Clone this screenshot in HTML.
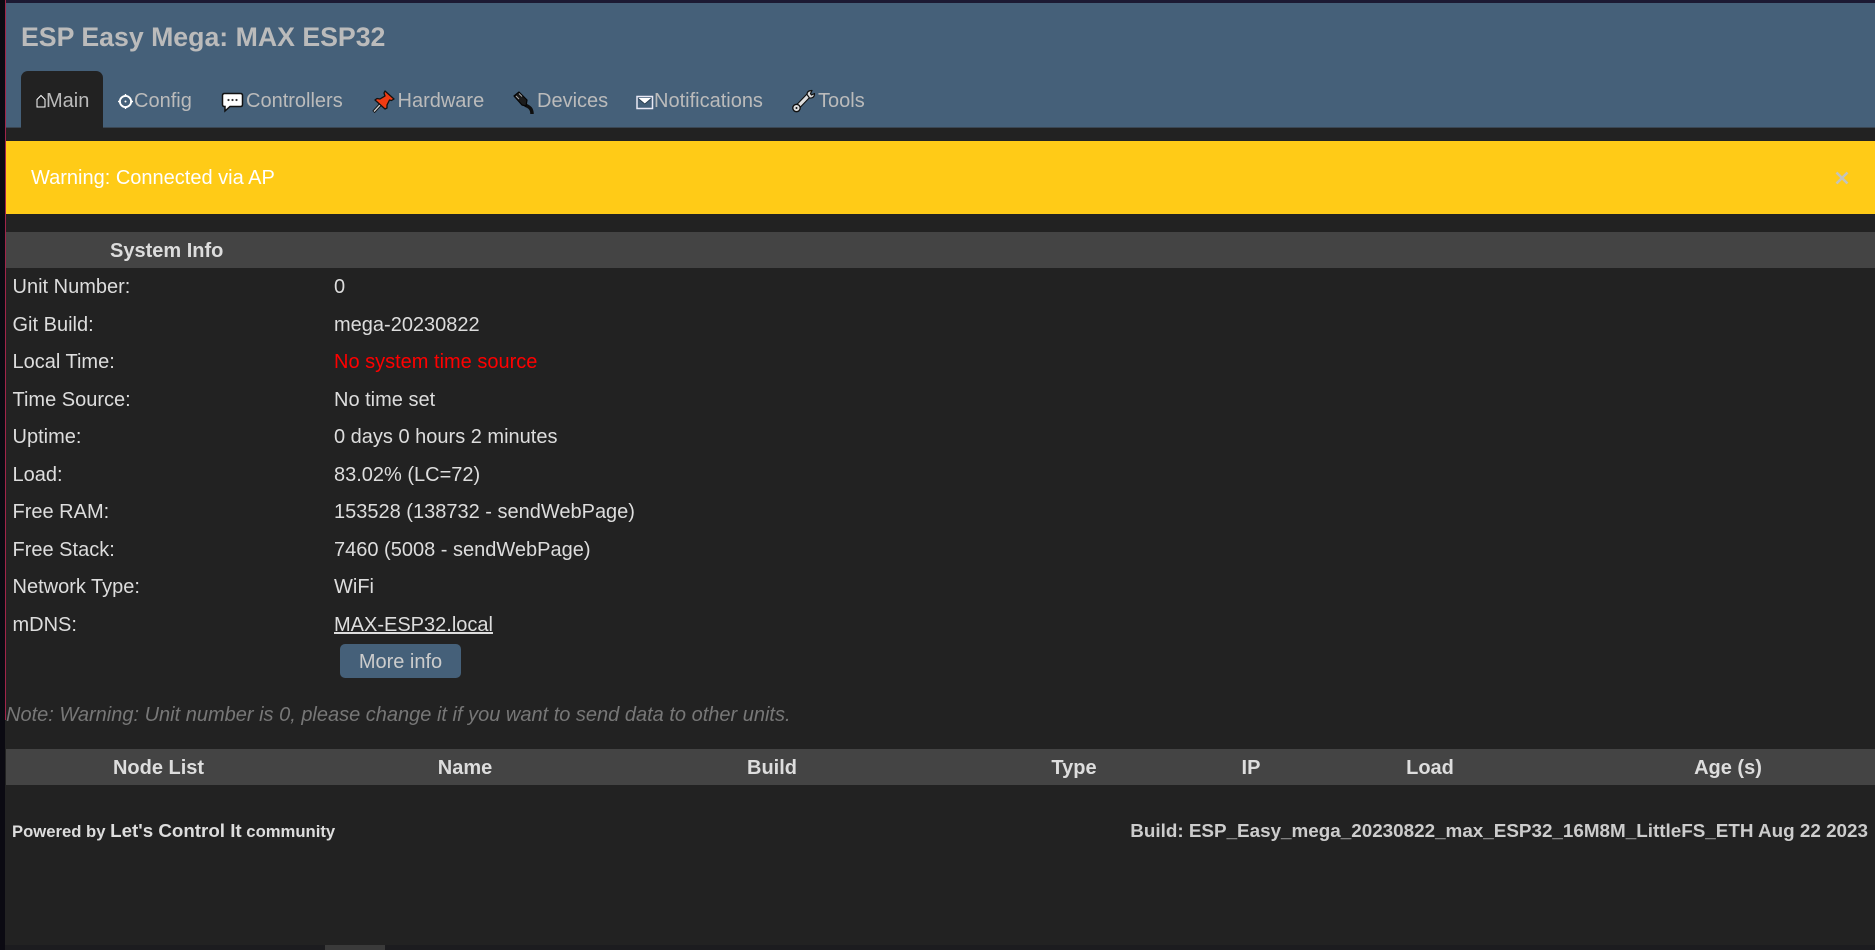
<!DOCTYPE html>
<html><head><meta charset="utf-8"><title>ESP Easy Mega</title>
<style>
html,body{margin:0;padding:0;background:#222;width:1875px;height:950px;overflow:hidden}
body{position:relative;font-family:"Liberation Sans",sans-serif;font-size:20px;color:#ddd}
.a{position:absolute}
.t{position:absolute;white-space:nowrap;line-height:30px;height:30px}
.n{color:#bbb;top:86px}
.h{font-weight:bold;color:#ddd}
svg{position:absolute;display:block}
</style></head><body>
<div class="a" style="left:0;top:0;width:1875px;height:3px;background:#1c1a33"></div>
<div class="a" style="left:6px;top:3px;width:1869px;height:124px;background:#456079"></div>
<div class="a" style="left:6px;top:127px;width:1869px;height:1px;background:#3a4652"></div>
<div class="t" style="left:21px;top:22px;font-size:26.7px;font-weight:bold;color:#bbb">ESP Easy Mega: MAX ESP32</div>
<div class="a" style="left:21px;top:71px;width:82px;height:57px;background:#222;border-radius:7px 7px 0 0"></div>
<svg style="left:36px;top:94px" width="10" height="14" viewBox="0 0 10 14"><path d="M1 13V5.500L5 1.500L9 5.500V13Z" fill="none" stroke="#fff" stroke-width="1"/></svg>
<div class="t n" style="left:46px">Main</div>
<svg style="left:117px;top:93px" width="17" height="17" viewBox="0 0 17 17"><circle cx="8.500" cy="8.500" r="5.600" fill="none" stroke="#fff" stroke-width="1.900"/><circle cx="8.500" cy="8.500" r="1" fill="#fff"/><path d="M8.500 1V2.500M8.500 14.500V16M1 8.500H2.500M14.500 8.500H16" stroke="#fff" stroke-width="1.400"/></svg>
<div class="t n" style="left:134px">Config</div>
<svg style="left:221px;top:92px" width="23" height="21" viewBox="0 0 23 21"><path d="M3.500 1.500H19.500Q21.500 1.500 21.500 3.500V12.500Q21.500 14.500 19.500 14.500H9L4 19V14.500H3.500Q1.500 14.500 1.500 12.500V3.500Q1.500 1.500 3.500 1.500Z" fill="#fff" stroke="#111" stroke-width="1.500"/><circle cx="7.500" cy="8" r="1.100" fill="#333"/><circle cx="11.500" cy="8" r="1.100" fill="#333"/><circle cx="15.500" cy="8" r="1.100" fill="#333"/></svg>
<div class="t n" style="left:246px">Controllers</div>
<svg style="left:365px;top:85px" width="40" height="35" viewBox="0 0 40 35"><path d="M15 20L8.500 27" stroke="#111" stroke-width="3.200"/><path d="M15 20L9 26.500" stroke="#ccc" stroke-width="1.300"/><path d="M20 6L29 14L26.500 15.500L24.500 15L22 20L22 23L20 24L10 15L12 13.500L15 14L20 11L19 8Z" fill="#f03c14" stroke="#111" stroke-width="1.300" stroke-linejoin="round"/></svg>
<div class="t n" style="left:397.500px">Hardware</div>
<svg style="left:508px;top:85px" width="40" height="35" viewBox="0 0 40 35"><path d="M17 20C22 22 24 24 24 29" fill="none" stroke="#0e0e0e" stroke-width="3.500"/><path d="M6 11L11 7L19 15L18 21L14 20Z" fill="#1c1c1c" stroke="#050505" stroke-width="1.200" stroke-linejoin="round"/><path d="M8 11L11 14M11 8.500L14 11.500" stroke="#aaa" stroke-width="1"/></svg>
<div class="t n" style="left:537px">Devices</div>
<svg style="left:630px;top:85px" width="40" height="35" viewBox="0 0 40 35"><rect x="7" y="11.500" width="15.500" height="12" fill="#456079" stroke="#e8e8f4" stroke-width="1.500"/><path d="M8.500 13H21L14.800 18.500Z" fill="#fff"/><path d="M8 13.500L14.800 19L21.500 13.500" fill="none" stroke="#27384a" stroke-width=".8"/></svg>
<div class="t n" style="left:654px">Notifications</div>
<svg style="left:785px;top:85px" width="40" height="35" viewBox="0 0 40 35"><path d="M12 22.500L24.500 9.500" stroke="#111" stroke-width="5.400"/><path d="M12 22.500L24.500 9.500" stroke="#ddd" stroke-width="3.200"/><circle cx="11.500" cy="23" r="3.700" fill="#ddd" stroke="#111" stroke-width="1.300"/><circle cx="11.500" cy="23" r="1" fill="#111"/><path d="M22 9.500Q22 5.500 27 5.500L25.500 8.500L26.500 10L29.500 8.500Q29.500 13.500 24.500 13Z" fill="#ddd" stroke="#111" stroke-width="1.200" stroke-linejoin="round"/></svg>
<div class="t n" style="left:818px">Tools</div>

<div class="a" style="left:6px;top:141px;width:1869px;height:73px;background:#ffcb17"></div>
<div class="t" style="left:31px;top:163px;color:#fff">Warning: Connected via AP</div>
<svg style="left:1835px;top:171px" width="14" height="14" viewBox="0 0 14 14"><path d="M1.500 1.500L12.500 12.500M12.500 1.500L1.500 12.500" stroke="#c4c4bc" stroke-width="2.600"/></svg>

<div class="a" style="left:6px;top:232px;width:1869px;height:36px;background:#444"></div>
<div class="t h" style="left:110px;top:236px">System Info</div>

<div class="t" style="left:12.500px;top:272px">Unit Number:</div><div class="t" style="left:334px;top:272px">0</div>
<div class="t" style="left:12.500px;top:310px">Git Build:</div><div class="t" style="left:334px;top:310px">mega-20230822</div>
<div class="t" style="left:12.500px;top:347px">Local Time:</div><div class="t" style="left:334px;top:347px;color:#f00">No system time source</div>
<div class="t" style="left:12.500px;top:385px">Time Source:</div><div class="t" style="left:334px;top:385px">No time set</div>
<div class="t" style="left:12.500px;top:422px">Uptime:</div><div class="t" style="left:334px;top:422px">0 days 0 hours 2 minutes</div>
<div class="t" style="left:12.500px;top:460px">Load:</div><div class="t" style="left:334px;top:460px">83.02% (LC=72)</div>
<div class="t" style="left:12.500px;top:497px">Free RAM:</div><div class="t" style="left:334px;top:497px">153528 (138732 - sendWebPage)</div>
<div class="t" style="left:12.500px;top:535px">Free Stack:</div><div class="t" style="left:334px;top:535px">7460 (5008 - sendWebPage)</div>
<div class="t" style="left:12.500px;top:572px">Network Type:</div><div class="t" style="left:334px;top:572px">WiFi</div>
<div class="t" style="left:12.500px;top:610px">mDNS:</div><div class="t" style="left:334px;top:610px;text-decoration:underline">MAX-ESP32.local</div>
<div class="a" style="left:340px;top:644px;width:121px;height:34px;background:#456079;border-radius:5px"></div>
<div class="t" style="left:340px;top:647px;width:121px;text-align:center;color:#ccc">More info</div>
<div class="t" style="left:6px;top:700px;color:#777;font-style:italic">Note: Warning: Unit number is 0, please change it if you want to send data to other units.</div>

<div class="a" style="left:6px;top:749px;width:1869px;height:36px;background:#444"></div>
<div class="t h" style="left:58.500px;top:753px;width:200px;text-align:center">Node List</div>
<div class="t h" style="left:365px;top:753px;width:200px;text-align:center">Name</div>
<div class="t h" style="left:672px;top:753px;width:200px;text-align:center">Build</div>
<div class="t h" style="left:974px;top:753px;width:200px;text-align:center">Type</div>
<div class="t h" style="left:1151px;top:753px;width:200px;text-align:center">IP</div>
<div class="t h" style="left:1330px;top:753px;width:200px;text-align:center">Load</div>
<div class="t h" style="left:1628px;top:753px;width:200px;text-align:center">Age (s)</div>

<div class="t" style="left:12px;top:816px;font-weight:bold;font-size:16.670px;color:#ddd">Powered by <span style="font-size:18.750px">Let's Control It</span> community</div>
<div class="t" style="right:7px;top:816px;font-weight:bold;font-size:18.850px;color:#ccc">Build: ESP_Easy_mega_20230822_max_ESP32_16M8M_LittleFS_ETH Aug 22 2023</div>

<div class="a" style="left:0;top:945px;width:1875px;height:5px;background:#1c1c1f"></div>
<div class="a" style="left:325px;top:945px;width:60px;height:5px;background:#3a3a3a"></div>
<div class="a" style="left:0;top:0;width:5px;height:950px;background:#0b0a12"></div>
<div class="a" style="left:5px;top:0;width:1px;height:720px;background:#a0254a"></div>
</body></html>
